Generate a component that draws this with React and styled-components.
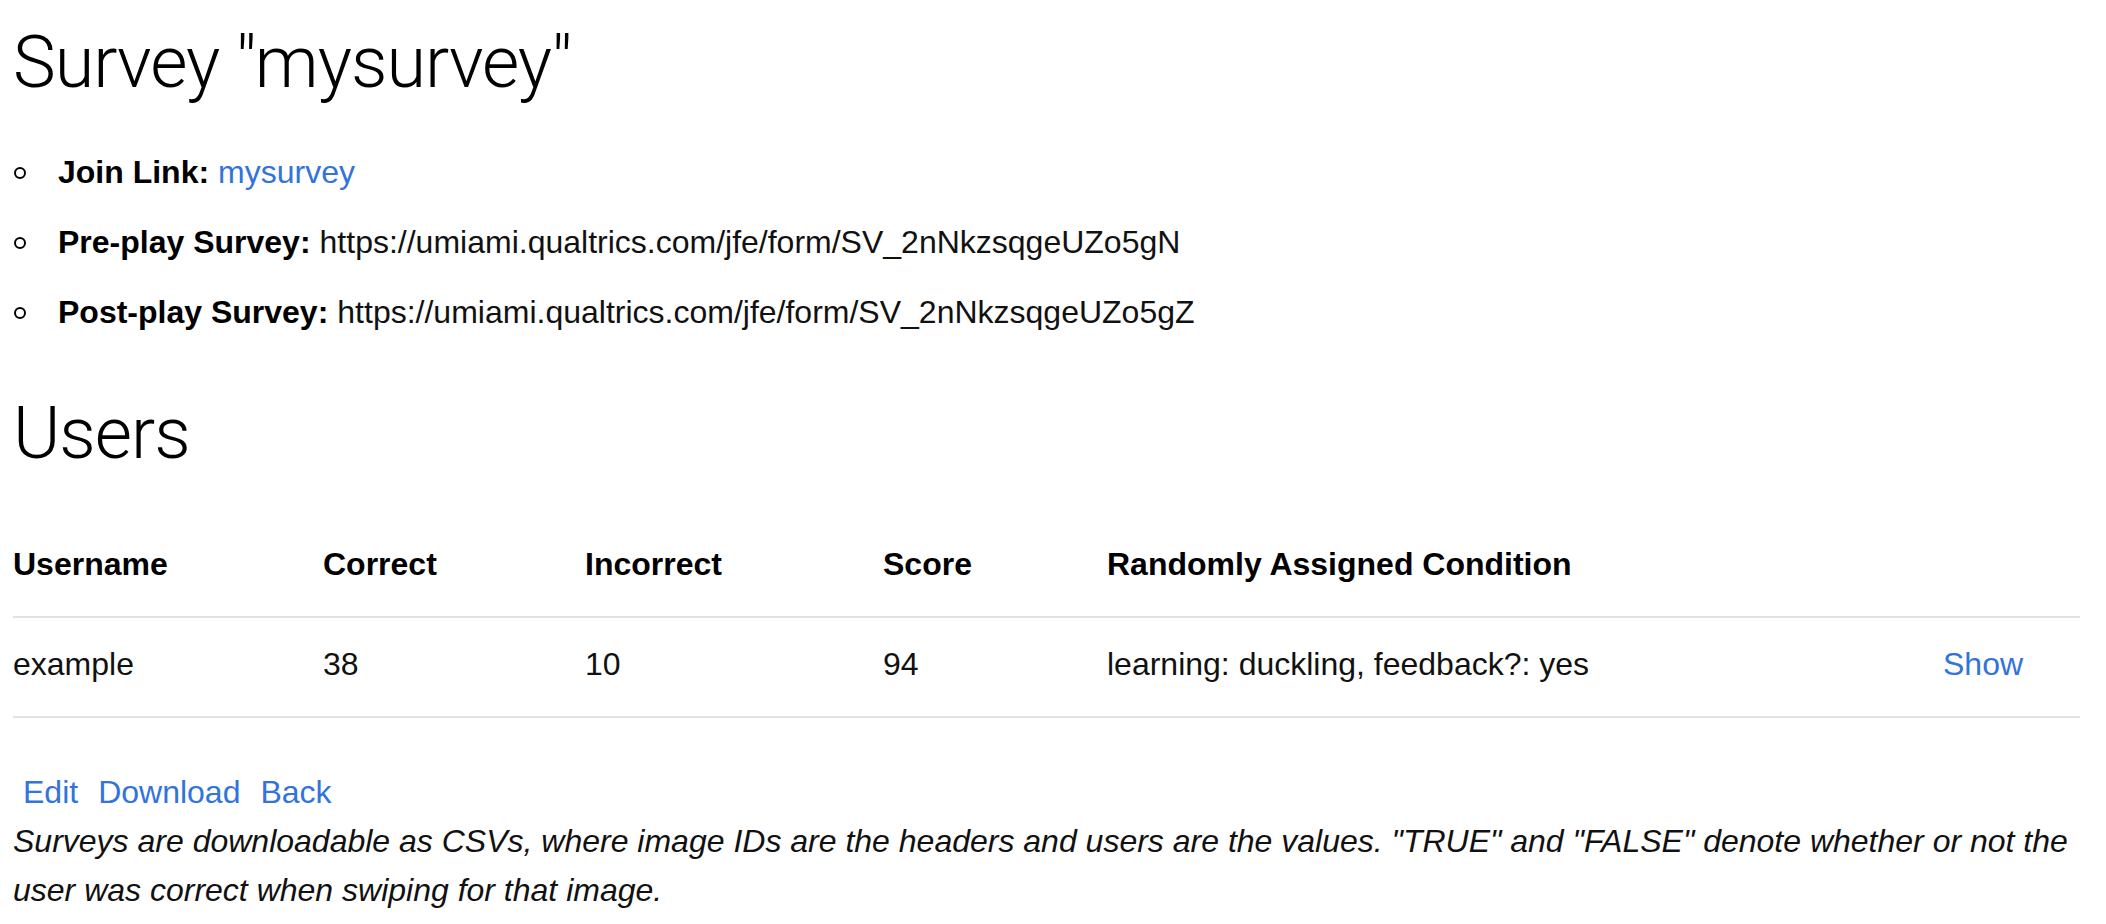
import React from 'react';
import styled, { createGlobalStyle } from 'styled-components';

const GlobalStyle = createGlobalStyle`
  html, body {
    margin: 0;
    padding: 0;
    background: #fff;
  }

  body {
    font-family: "Liberation Sans", Arial, sans-serif;
    font-size: 32px;
    line-height: 49px;
    color: #111;
  }
`;

const Page = styled.main`
  padding: 18px 26px 0 13px;
`;

const Heading = styled.h1`
  margin: ${(p) => p.$top || 0}px 0 0;
  font-family: Roboto, "Liberation Sans", sans-serif;
  font-weight: 300;
  font-size: 72px;
  line-height: 90px;
  letter-spacing: -1px;
  color: #000;
`;

const InfoList = styled.ul`
  list-style: none;
  margin: 39px 0 0;
  padding: 0;
`;

const InfoItem = styled.li`
  display: flex;
  align-items: center;
  line-height: 50px;
  margin-bottom: 20px;

  &:last-child {
    margin-bottom: 0;
  }

  &::before {
    content: '';
    width: 8px;
    height: 8px;
    border: 2px solid #000;
    border-radius: 50%;
    margin: 2px 32px 0 1px;
    flex-shrink: 0;
  }
`;

const Label = styled.strong`
  font-weight: 700;
  color: #000;
  margin-right: 9px;
`;

const Link = styled.a`
  color: #3273dc;
  text-decoration: none;
  cursor: pointer;
  margin: ${(p) => (p.$spaced ? '0 10px' : '0')};
`;

const Table = styled.table`
  width: 100%;
  margin-top: 39px;
  border-collapse: collapse;
  table-layout: fixed;
`;

const Th = styled.th`
  text-align: left;
  font-weight: 700;
  color: #000;
  line-height: 50px;
  padding: 21px 0 27px ${(p) => (p.$first ? 0 : 30)}px;
  border-bottom: 2px solid #e1e1e1;
  white-space: nowrap;
`;

const Td = styled.td`
  text-align: left;
  line-height: 50px;
  padding: 21px 0 27px ${(p) => (p.$first ? 0 : 30)}px;
  border-bottom: 2px solid #e1e1e1;
  white-space: nowrap;
`;

const Actions = styled.div`
  display: flex;
  margin-top: 50px;
  line-height: 49px;
`;

const Note = styled.p`
  margin: 0;
  font-style: italic;
  line-height: 49px;
`;

const columns = [
  { key: 'username', label: 'Username', width: 280 },
  { key: 'correct', label: 'Correct', width: 262 },
  { key: 'incorrect', label: 'Incorrect', width: 298 },
  { key: 'score', label: 'Score', width: 224 },
  { key: 'condition', label: 'Randomly Assigned Condition', width: 836 },
  { key: 'action', label: '', width: 167 },
];

const users = [
  {
    username: 'example',
    correct: 38,
    incorrect: 10,
    score: 94,
    condition: 'learning: duckling, feedback?: yes',
  },
];

const App = () => {
  return (
    <>
      <GlobalStyle />
      <Page>
        <Heading>Survey "mysurvey"</Heading>
        <InfoList>
          <InfoItem>
            <Label>Join Link:</Label>
            <Link>mysurvey</Link>
          </InfoItem>
          <InfoItem>
            <Label>Pre-play Survey:</Label>
            https://umiami.qualtrics.com/jfe/form/SV_2nNkzsqgeUZo5gN
          </InfoItem>
          <InfoItem>
            <Label>Post-play Survey:</Label>
            https://umiami.qualtrics.com/jfe/form/SV_2nNkzsqgeUZo5gZ
          </InfoItem>
        </InfoList>

        <Heading as="h2" $top={52}>Users</Heading>

        <Table>
          <colgroup>
            {columns.map((c) => (
              <col key={c.key} style={{ width: c.width }} />
            ))}
          </colgroup>
          <thead>
            <tr>
              {columns.map((c, i) => (
                <Th key={c.key} $first={i === 0}>{c.label}</Th>
              ))}
            </tr>
          </thead>
          <tbody>
            {users.map((u) => (
              <tr key={u.username}>
                <Td $first>{u.username}</Td>
                <Td>{u.correct}</Td>
                <Td>{u.incorrect}</Td>
                <Td>{u.score}</Td>
                <Td>{u.condition}</Td>
                <Td>
                  <Link>Show</Link>
                </Td>
              </tr>
            ))}
          </tbody>
        </Table>

        <Actions>
          <Link $spaced>Edit</Link>
          <Link $spaced>Download</Link>
          <Link $spaced>Back</Link>
        </Actions>
        <Note>
          Surveys are downloadable as CSVs, where image IDs are the headers and users are the
          values. "TRUE" and "FALSE" denote whether or not the user was correct when swiping
          for that image.
        </Note>
      </Page>
    </>
  );
};

export default App;
